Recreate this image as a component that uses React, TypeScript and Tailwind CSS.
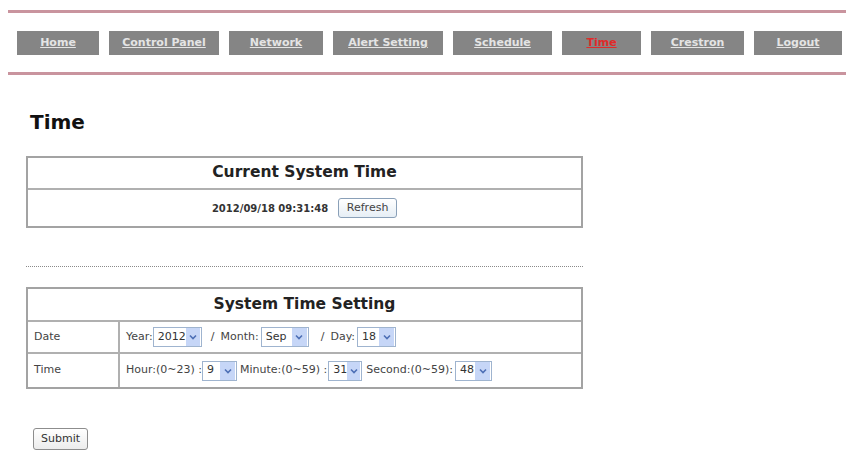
const navItems = [
  { label: "Home", w: "w-[82px]" },
  { label: "Control Panel", w: "w-[110px]" },
  { label: "Network", w: "w-[94px]" },
  { label: "Alert Setting", w: "w-[110px]" },
  { label: "Schedule", w: "w-[99px]" },
  { label: "Time", w: "w-[79px]", active: true },
  { label: "Crestron", w: "w-[93px]" },
  { label: "Logout", w: "w-[88px]" },
];

const Select = ({ value, w }: { value: string; w: string }) => (
  <span className={`inline-flex items-center h-[20px] border border-[#9fb4cf] bg-white ${w}`}>
    <span className="flex-1 pl-[4px] text-[11px] text-[#333]">{value}</span>
    <span className="flex items-center justify-center w-[15px] h-[18px] bg-[#c6d6f7] mr-[1px]">
      <svg width="8" height="6" viewBox="0 0 8 6">
        <path d="M1 1.5 L4 4.5 L7 1.5" stroke="#4d6fb5" strokeWidth="1.6" fill="none" />
      </svg>
    </span>
  </span>
);

export default function App() {
  return (
    <div className="w-[854px] h-[451px] overflow-hidden bg-white font-['DejaVu_Sans',Verdana,sans-serif] text-[#222]">
      <div className="mx-2 mt-[10px] h-[3px] bg-[#c9949e]" />

      <nav className="flex gap-[10px] pl-[17px] mt-[18px]">
        {navItems.map((n) => (
          <a
            key={n.label}
            className={`flex items-center justify-center h-[24px] bg-[#858585] text-[11px] font-bold underline ${n.w} ${
              n.active ? "text-[#e02a2a]" : "text-[#e4e4e4]"
            }`}
          >
            {n.label}
          </a>
        ))}
      </nav>

      <div className="mx-2 mt-[17px] h-[3px] bg-[#c9949e]" />

      <h1 className="ml-[30px] mt-[35px] text-[20px] leading-[24px] font-bold text-[#111]">Time</h1>

      <div className="ml-[26px] mt-[22px] w-[557px] border-2 border-[#a3a3a3]">
        <div className="h-[32px] flex items-center justify-center text-[15.5px] font-bold border-b-2 border-[#b0b0b0]">
          Current System Time
        </div>
        <div className="h-[36px] flex items-center justify-center gap-[10px]">
          <span className="text-[10px] font-bold text-[#333]">2012/09/18 09:31:48</span>
          <button className="h-[20px] w-[59px] rounded-[3px] border border-[#8aa0b8] bg-gradient-to-b from-white to-[#e6eef5] text-[11px] text-[#444]">
            Refresh
          </button>
        </div>
      </div>

      <div className="ml-[26px] mt-[38px] w-[557px] border-t border-dotted border-[#8a8a8a]" />

      <div className="ml-[26px] mt-[20px] w-[557px] border-2 border-[#a3a3a3] text-[11px] text-[#444]">
        <div className="h-[33px] flex items-center justify-center text-[15.5px] font-bold text-[#222] border-b-2 border-[#b0b0b0]">
          System Time Setting
        </div>
        <div className="flex h-[32px] border-b-2 border-[#b0b0b0]">
          <div className="w-[92px] pl-[6px] flex items-center border-r-2 border-[#b0b0b0]">Date</div>
          <div className="flex items-center pl-[6px]">
            <span>Year:</span>
            <Select value="2012" w="w-[49px]" />
            <span className="ml-[9px] mr-[6px]">/</span>
            <span className="mr-[2px]">Month:</span>
            <Select value="Sep" w="w-[48px]" />
            <span className="ml-[12px] mr-[6px]">/</span>
            <span className="mr-[2px]">Day:</span>
            <Select value="18" w="w-[39px]" />
          </div>
        </div>
        <div className="flex h-[33px]">
          <div className="w-[92px] pl-[6px] flex items-center border-r-2 border-[#b0b0b0]">Time</div>
          <div className="flex items-center pl-[6px]">
            <span>Hour:(0~23) :</span>
            <Select value="9" w="w-[35px]" />
            <span className="ml-[3px] mr-[1px]">Minute:(0~59) :</span>
            <Select value="31" w="w-[34px]" />
            <span className="ml-[4px] mr-[2px]">Second:(0~59):</span>
            <Select value="48" w="w-[37px]" />
          </div>
        </div>
      </div>

      <button className="ml-[33px] mt-[39px] h-[22px] w-[55px] rounded-[3px] border border-[#8d8d8d] bg-gradient-to-b from-white to-[#ececec] text-[11px] text-[#333]">
        Submit
      </button>
    </div>
  );
}
